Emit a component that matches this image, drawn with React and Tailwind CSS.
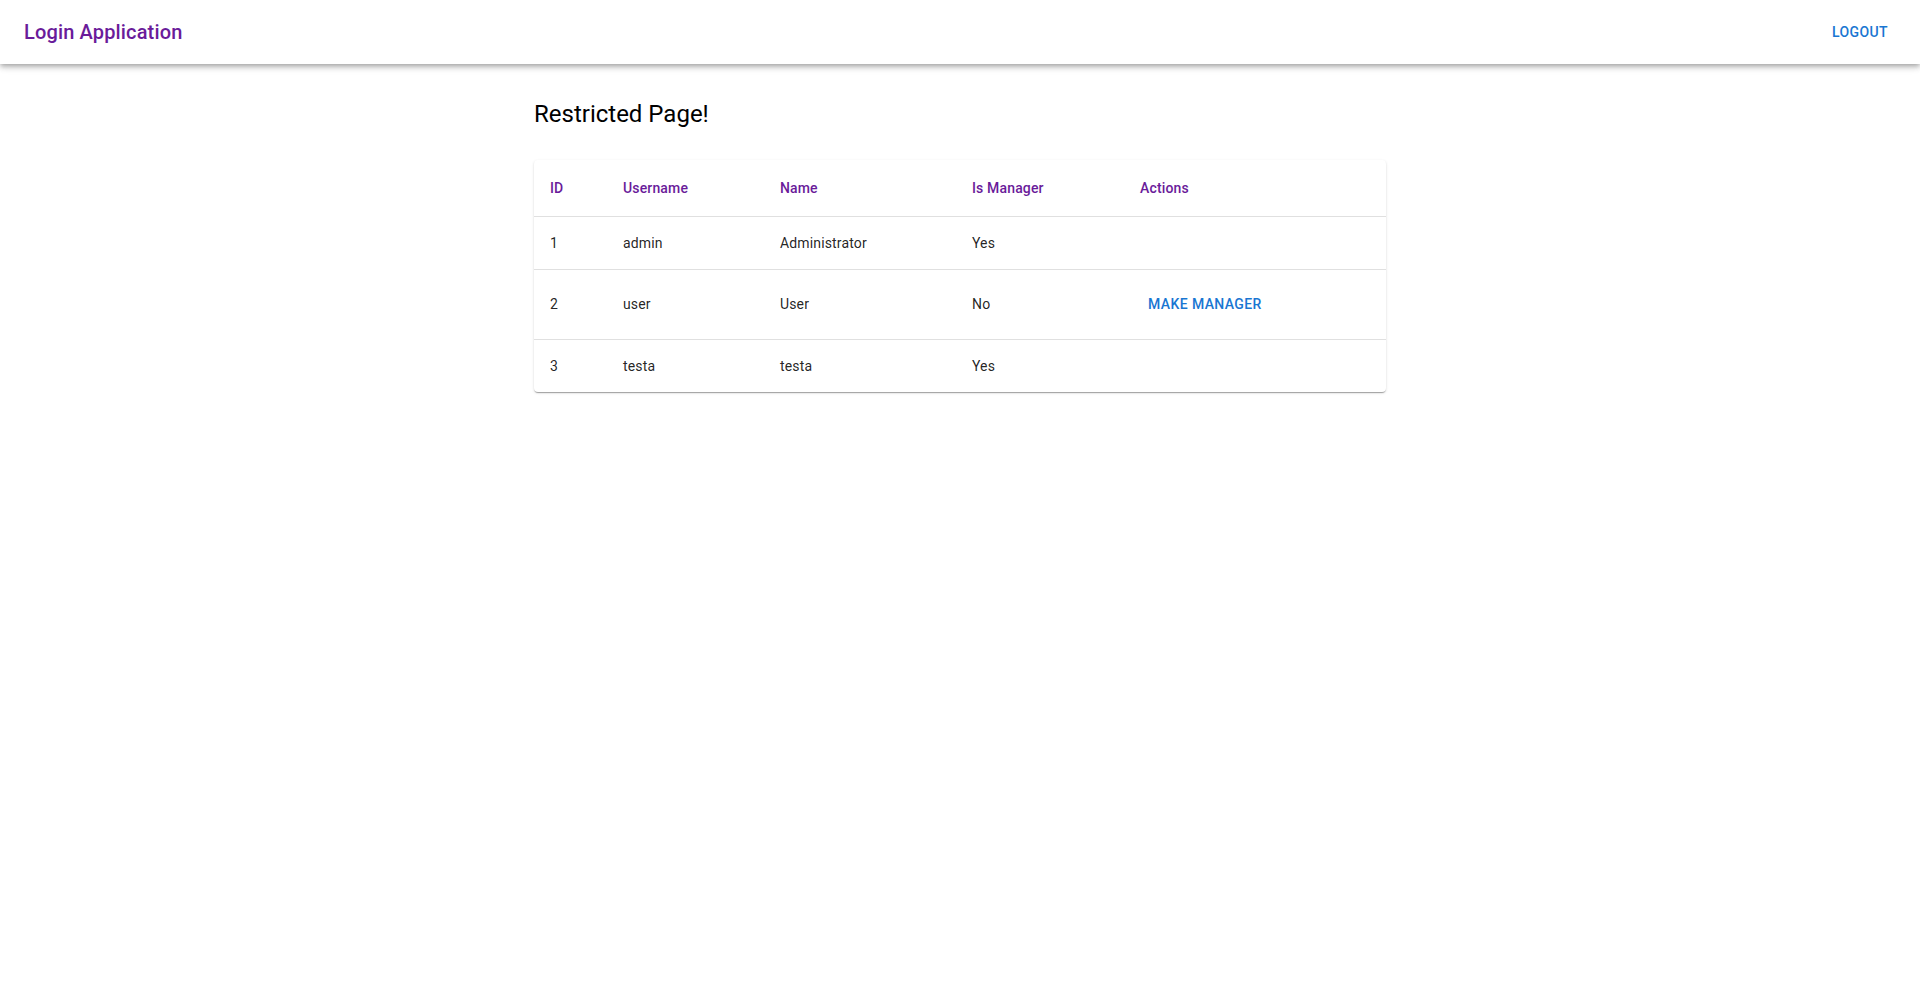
import React from "react";

const rows = [
  { id: 1, username: "admin", name: "Administrator", manager: "Yes" },
  { id: 2, username: "user", name: "User", manager: "No", action: true },
  { id: 3, username: "testa", name: "testa", manager: "Yes" },
];

export default function App() {
  return (
    <div className="min-h-[995px] bg-white font-['Roboto',sans-serif] text-[rgba(0,0,0,0.87)]">
      <header className="relative z-10 flex h-16 items-center justify-between bg-white px-6 shadow-[0px_2px_4px_-1px_rgba(0,0,0,0.2),0px_4px_5px_0px_rgba(0,0,0,0.14),0px_1px_10px_0px_rgba(0,0,0,0.12)]">
        <h1 className="text-[20px] font-medium leading-[1.6] tracking-[0.0075em] text-[#6a1b9a]">
          Login Application
        </h1>
        <button className="rounded px-2 py-[6px] text-[14px] font-medium uppercase leading-[1.75] tracking-[0.02857em] text-[#1976d2]">
          Logout
        </button>
      </header>
      <main className="mx-auto w-full max-w-[900px] px-6">
        <h2 className="mt-[34px] mb-[30px] text-[24px] font-normal leading-[32px] text-black">
          Restricted Page!
        </h2>
        <div className="overflow-hidden rounded bg-white shadow-[0px_2px_1px_-1px_rgba(0,0,0,0.2),0px_1px_1px_0px_rgba(0,0,0,0.14),0px_1px_3px_0px_rgba(0,0,0,0.12)]">
          <table className="w-full table-fixed border-collapse text-left text-[14px]">
            <colgroup>
              <col className="w-[73px]" />
              <col className="w-[157px]" />
              <col className="w-[192px]" />
              <col className="w-[168px]" />
              <col />
            </colgroup>
            <thead>
              <tr className="border-b border-[#e0e0e0]">
                {["ID", "Username", "Name", "Is Manager", "Actions"].map((h) => (
                  <th
                    key={h}
                    className="p-4 text-[14px] font-medium leading-6 tracking-[0.01071em] text-[#6a1b9a]"
                  >
                    {h}
                  </th>
                ))}
              </tr>
            </thead>
            <tbody>
              {rows.map((r, i) => (
                <tr
                  key={r.id}
                  className={i < rows.length - 1 ? "border-b border-[#e0e0e0]" : ""}
                >
                  <td className="p-4 leading-5 tracking-[0.01071em]">{r.id}</td>
                  <td className="p-4 leading-5 tracking-[0.01071em]">{r.username}</td>
                  <td className="p-4 leading-5 tracking-[0.01071em]">{r.name}</td>
                  <td className="p-4 leading-5 tracking-[0.01071em]">{r.manager}</td>
                  <td className="p-4 leading-5 tracking-[0.01071em]">
                    {r.action ? (
                      <button className="rounded px-2 py-[6px] text-[14px] font-medium uppercase leading-[1.75] tracking-[0.02857em] text-[#1976d2]">
                        Make Manager
                      </button>
                    ) : null}
                  </td>
                </tr>
              ))}
            </tbody>
          </table>
        </div>
      </main>
    </div>
  );
}
